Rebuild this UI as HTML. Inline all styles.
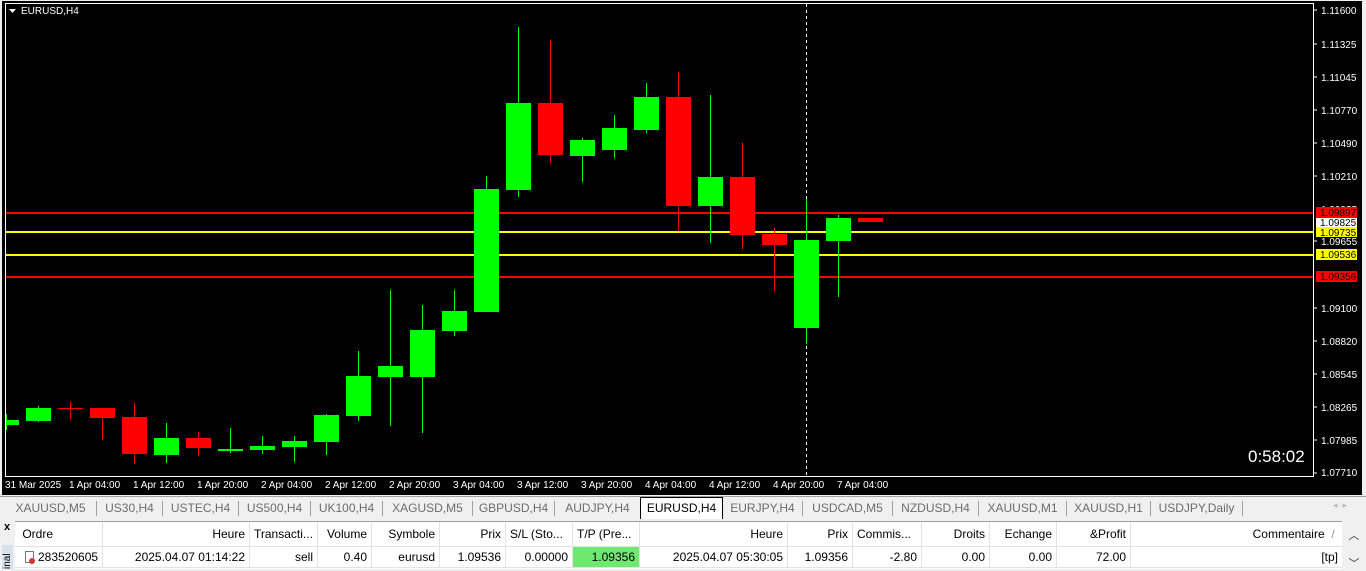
<!DOCTYPE html>
<html><head><meta charset="utf-8"><style>
*{margin:0;padding:0;box-sizing:border-box}
body{width:1366px;height:569px;overflow:hidden;background:#f0f0f0;font-family:"Liberation Sans",sans-serif;position:relative}
.tabs{position:absolute;left:0;top:496px;width:1366px;height:23px;background:#f0f0f0;border-top:1px solid #a0a0a0;font-size:12px;color:#6d6d6d}
.tab{position:absolute;top:4px;border-right:1px solid #a0a0a0;padding:0 0;height:15px;line-height:15px;text-align:center}
.act{position:absolute;left:640px;top:0;width:83px;height:22px;background:#fff;border:1px solid #000;border-bottom:none;color:#000;text-align:center;line-height:21px}
.tbl{position:absolute;left:15px;top:521px;width:1327px;height:48px;background:#fff;border-top:1px solid #a0a0a0;font-size:12px;color:#000}
.c{position:absolute;height:24px;line-height:24px;border-right:1px solid #e3e3e3;padding:0 4px;white-space:nowrap;overflow:hidden}
.r{text-align:right}
.row2 .c{top:25px;height:20px;line-height:20px}
.hline{position:absolute;left:0;width:1327px;height:1px;background:#e3e3e3}
</style></head><body>
<svg width="1366" height="496" style="position:absolute;left:0;top:0" font-family="Liberation Sans, sans-serif">
<rect x="0" y="0" width="1366" height="496" fill="#f0f0f0"/>
<rect x="2" y="1" width="1360" height="494" fill="#000"/>
<rect x="5.5" y="3.5" width="1308" height="473" fill="none" stroke="#fff" stroke-width="1"/>
<polygon points="9,9 16,9 12.5,13" fill="#fff"/>
<text x="21" y="14" fill="#fff" font-size="10">EURUSD,H4</text>
<line x1="806.5" y1="4" x2="806.5" y2="476" stroke="#fff" stroke-dasharray="3,3"/>
<line x1="6" y1="213" x2="1313" y2="213" stroke="#f00" stroke-width="2"/>
<line x1="6" y1="232" x2="1313" y2="232" stroke="#ff0" stroke-width="2"/>
<line x1="6" y1="255" x2="1313" y2="255" stroke="#ff0" stroke-width="2"/>
<line x1="6" y1="277" x2="1313" y2="277" stroke="#f00" stroke-width="2"/>
<g id="c">
<!-- x, open/close top, bottom, wickTop, wickBot, color -->
</g>
<g stroke-width="1">
<line x1="6.5" y1="414" x2="6.5" y2="430" stroke="#0f0"/><rect x="6" y="420" width="13" height="5" fill="#0f0"/>
<line x1="38.5" y1="406" x2="38.5" y2="422" stroke="#0f0"/><rect x="26" y="408" width="25" height="13" fill="#0f0"/>
<line x1="70.5" y1="402" x2="70.5" y2="419" stroke="#f00"/><rect x="58" y="408" width="25" height="1" fill="#f00"/>
<line x1="102.5" y1="408" x2="102.5" y2="440" stroke="#f00"/><rect x="90" y="408" width="25" height="10" fill="#f00"/>
<line x1="134.5" y1="403" x2="134.5" y2="464" stroke="#f00"/><rect x="122" y="417" width="25" height="37" fill="#f00"/>
<line x1="166.5" y1="423" x2="166.5" y2="463" stroke="#0f0"/><rect x="154" y="438" width="25" height="17" fill="#0f0"/>
<line x1="198.5" y1="432" x2="198.5" y2="456" stroke="#f00"/><rect x="186" y="438" width="25" height="10" fill="#f00"/>
<line x1="230.5" y1="428" x2="230.5" y2="453" stroke="#0f0"/><rect x="218" y="449" width="25" height="2" fill="#0f0"/>
<line x1="262.5" y1="436" x2="262.5" y2="454" stroke="#0f0"/><rect x="250" y="446" width="25" height="4" fill="#0f0"/>
<line x1="294.5" y1="436" x2="294.5" y2="462" stroke="#0f0"/><rect x="282" y="441" width="25" height="6" fill="#0f0"/>
<line x1="326.5" y1="414" x2="326.5" y2="455" stroke="#0f0"/><rect x="314" y="415" width="25" height="27" fill="#0f0"/>
<line x1="358.5" y1="351" x2="358.5" y2="421" stroke="#0f0"/><rect x="346" y="376" width="25" height="40" fill="#0f0"/>
<line x1="390.5" y1="290" x2="390.5" y2="426" stroke="#0f0"/><rect x="378" y="366" width="25" height="11" fill="#0f0"/>
<line x1="422.5" y1="305" x2="422.5" y2="433" stroke="#0f0"/><rect x="410" y="330" width="25" height="47" fill="#0f0"/>
<line x1="454.5" y1="290" x2="454.5" y2="336" stroke="#0f0"/><rect x="442" y="311" width="25" height="20" fill="#0f0"/>
<line x1="486.5" y1="176" x2="486.5" y2="312" stroke="#0f0"/><rect x="474" y="189" width="25" height="123" fill="#0f0"/>
<line x1="518.5" y1="27" x2="518.5" y2="197" stroke="#0f0"/><rect x="506" y="103" width="25" height="87" fill="#0f0"/>
<line x1="550.5" y1="40" x2="550.5" y2="163" stroke="#f00"/><rect x="538" y="103" width="25" height="52" fill="#f00"/>
<line x1="582.5" y1="138" x2="582.5" y2="182" stroke="#0f0"/><rect x="570" y="140" width="25" height="16" fill="#0f0"/>
<line x1="614.5" y1="115" x2="614.5" y2="158" stroke="#0f0"/><rect x="602" y="128" width="25" height="22" fill="#0f0"/>
<line x1="646.5" y1="83" x2="646.5" y2="133" stroke="#0f0"/><rect x="634" y="97" width="25" height="33" fill="#0f0"/>
<line x1="678.5" y1="72" x2="678.5" y2="231" stroke="#f00"/><rect x="666" y="97" width="25" height="109" fill="#f00"/>
<line x1="710.5" y1="95" x2="710.5" y2="243" stroke="#0f0"/><rect x="698" y="177" width="25" height="29" fill="#0f0"/>
<line x1="742.5" y1="143" x2="742.5" y2="249" stroke="#f00"/><rect x="730" y="177" width="25" height="58" fill="#f00"/>
<line x1="774.5" y1="228" x2="774.5" y2="291" stroke="#f00"/><rect x="762" y="234" width="25" height="11" fill="#f00"/>
<line x1="806.5" y1="199" x2="806.5" y2="344" stroke="#0f0"/><rect x="794" y="240" width="25" height="88" fill="#0f0"/>
<line x1="838.5" y1="215" x2="838.5" y2="297" stroke="#0f0"/><rect x="826" y="218" width="25" height="23" fill="#0f0"/>
<rect x="858" y="218" width="25" height="4" fill="#f00"/>
</g>
<g fill="#fff" font-size="10">
<text x="1321" y="14">1.11600</text><text x="1321" y="48">1.11325</text><text x="1321" y="81">1.11045</text>
<text x="1321" y="114">1.10770</text><text x="1321" y="147">1.10490</text><text x="1321" y="180">1.10210</text>
<text x="1321" y="213">1.09935</text><text x="1321" y="245">1.09655</text><text x="1321" y="312">1.09100</text>
<text x="1321" y="345">1.08820</text><text x="1321" y="378">1.08545</text><text x="1321" y="411">1.08265</text>
<text x="1321" y="444">1.07985</text><text x="1321" y="476">1.07710</text>
</g>
<g stroke="#fff"><line x1="1313" y1="10" x2="1317" y2="10"/><line x1="1313" y1="44" x2="1317" y2="44"/><line x1="1313" y1="77" x2="1317" y2="77"/><line x1="1313" y1="110" x2="1317" y2="110"/><line x1="1313" y1="143" x2="1317" y2="143"/><line x1="1313" y1="176" x2="1317" y2="176"/><line x1="1313" y1="241" x2="1317" y2="241"/><line x1="1313" y1="308" x2="1317" y2="308"/><line x1="1313" y1="341" x2="1317" y2="341"/><line x1="1313" y1="374" x2="1317" y2="374"/><line x1="1313" y1="407" x2="1317" y2="407"/><line x1="1313" y1="440" x2="1317" y2="440"/><line x1="1313" y1="473" x2="1317" y2="473"/></g>
<rect x="1316" y="207" width="41" height="11" fill="#f00"/><text x="1320" y="216" fill="#000" font-size="10">1.09897</text>
<rect x="1316" y="218" width="41" height="9" fill="#fff"/><text x="1320" y="226" fill="#000" font-size="10">1.09825</text>
<rect x="1316" y="227" width="41" height="10" fill="#ff0"/><text x="1320" y="236" fill="#000" font-size="10">1.09735</text>
<rect x="1316" y="249" width="41" height="11" fill="#ff0"/><text x="1320" y="258" fill="#000" font-size="10">1.09536</text>
<rect x="1316" y="271" width="41" height="11" fill="#f00"/><text x="1320" y="280" fill="#000" font-size="10">1.09356</text>
<text x="1248" y="462" fill="#fff" font-size="17">0:58:02</text>
<g fill="#fff" font-size="10">
<text x="5" y="488">31 Mar 2025</text><text x="69" y="488">1 Apr 04:00</text><text x="133" y="488">1 Apr 12:00</text>
<text x="197" y="488">1 Apr 20:00</text><text x="261" y="488">2 Apr 04:00</text><text x="325" y="488">2 Apr 12:00</text>
<text x="389" y="488">2 Apr 20:00</text><text x="453" y="488">3 Apr 04:00</text><text x="517" y="488">3 Apr 12:00</text>
<text x="581" y="488">3 Apr 20:00</text><text x="645" y="488">4 Apr 04:00</text><text x="709" y="488">4 Apr 12:00</text>
<text x="773" y="488">4 Apr 20:00</text><text x="837" y="488">7 Apr 04:00</text>
</g>
</svg>
<div class="tabs">
<div class="tab" style="left:5px;width:92px">XAUUSD,M5</div>
<div class="tab" style="left:97px;width:66px">US30,H4</div>
<div class="tab" style="left:163px;width:76px">USTEC,H4</div>
<div class="tab" style="left:239px;width:72px">US500,H4</div>
<div class="tab" style="left:311px;width:72px">UK100,H4</div>
<div class="tab" style="left:383px;width:90px">XAGUSD,M5</div>
<div class="tab" style="left:473px;width:82px">GBPUSD,H4</div>
<div class="tab" style="left:555px;width:85px;border:none">AUDJPY,H4</div>
<div class="act">EURUSD,H4</div>
<div class="tab" style="left:723px;width:80px">EURJPY,H4</div>
<div class="tab" style="left:803px;width:90px">USDCAD,M5</div>
<div class="tab" style="left:893px;width:86px">NZDUSD,H4</div>
<div class="tab" style="left:979px;width:88px">XAUUSD,M1</div>
<div class="tab" style="left:1067px;width:84px">XAUUSD,H1</div>
<div class="tab" style="left:1151px;width:92px">USDJPY,Daily</div>
<div style="position:absolute;left:1333px;top:3px;color:#bbb;font-size:9px">◂ &nbsp;▸</div>
</div>
<div style="position:absolute;left:0;top:519px;width:15px;height:50px;background:#f0f0f0">
<div style="position:absolute;left:4px;top:2px;font-size:11px;font-weight:bold">x</div>
<div style="position:absolute;left:1px;top:544px;"></div>
<div style="position:absolute;left:2px;top:26px;width:11px;height:24px;background:#d8e2ee;font-size:10px;writing-mode:vertical-rl;transform:rotate(180deg);line-height:11px;overflow:hidden">inal</div>
</div>
<div class="tbl">
<div class="c" style="left:0;width:88px">&nbsp;Ordre</div>
<div class="c r" style="left:88px;width:147px">Heure</div>
<div class="c" style="left:235px;width:68px">Transacti...</div>
<div class="c r" style="left:303px;width:54px">Volume</div>
<div class="c r" style="left:357px;width:68px">Symbole</div>
<div class="c r" style="left:425px;width:66px">Prix</div>
<div class="c" style="left:491px;width:67px">S/L (Sto...</div>
<div class="c" style="left:558px;width:67px">T/P (Pre...</div>
<div class="c r" style="left:625px;width:148px">Heure</div>
<div class="c r" style="left:773px;width:65px">Prix</div>
<div class="c" style="left:838px;width:69px">Commis...</div>
<div class="c r" style="left:907px;width:68px">Droits</div>
<div class="c r" style="left:975px;width:67px">Echange</div>
<div class="c r" style="left:1042px;width:74px">&amp;Profit</div>
<div class="c r" style="left:1116px;width:211px;border:none">Commentaire &nbsp;<span style="color:#999">/</span>&nbsp;</div>
<div class="hline" style="top:24px"></div>
<div class="row2">
<div class="c" style="left:0;width:88px"><span style="display:inline-block;width:9px;height:12px;border:1px solid #777;background:#fff;vertical-align:-2px;margin:0 4px 0 6px;position:relative"><span style="position:absolute;left:3px;top:6px;width:6px;height:6px;border-radius:3px;background:#d33"></span></span>283520605</div>
<div class="c r" style="left:88px;width:147px">2025.04.07 01:14:22</div>
<div class="c r" style="left:235px;width:68px">sell</div>
<div class="c r" style="left:303px;width:54px">0.40</div>
<div class="c r" style="left:357px;width:68px">eurusd</div>
<div class="c r" style="left:425px;width:66px">1.09536</div>
<div class="c r" style="left:491px;width:67px">0.00000</div>
<div class="c r" style="left:558px;width:67px;background:#6ee86e">1.09356</div>
<div class="c r" style="left:625px;width:148px">2025.04.07 05:30:05</div>
<div class="c r" style="left:773px;width:65px">1.09356</div>
<div class="c r" style="left:838px;width:69px">-2.80</div>
<div class="c r" style="left:907px;width:68px">0.00</div>
<div class="c r" style="left:975px;width:67px">0.00</div>
<div class="c r" style="left:1042px;width:74px">72.00</div>
<div class="c r" style="left:1116px;width:211px;border:none">[tp]</div>
</div>
<div class="hline" style="top:45px"></div>
</div>
<div style="position:absolute;left:1342px;top:521px;width:24px;height:48px;background:#f0f0f0;font-size:11px;color:#333;text-align:center"><div style="margin-top:6px">︿</div><div style="margin-top:12px">﹀</div></div>
</body></html>
